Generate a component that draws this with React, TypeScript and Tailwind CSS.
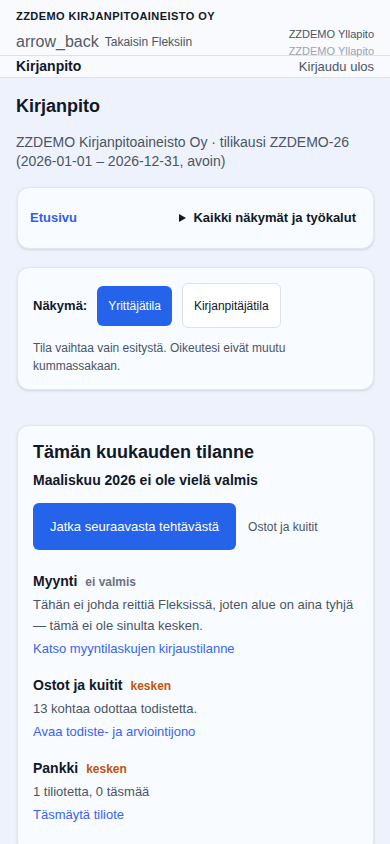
const sections = [
  {
    title: "Myynti",
    status: "ei valmis",
    statusClass: "text-[#6b7280]",
    body: "Tähän ei johda reittiä Fleksissä, joten alue on aina tyhjä — tämä ei ole sinulta kesken.",
    link: "Katso myyntilaskujen kirjaustilanne",
  },
  {
    title: "Ostot ja kuitit",
    status: "kesken",
    statusClass: "text-[#c2540f]",
    body: "13 kohtaa odottaa todistetta.",
    link: "Avaa todiste- ja arviointijono",
  },
  {
    title: "Pankki",
    status: "kesken",
    statusClass: "text-[#c2540f]",
    body: "1 tiliotetta, 0 täsmää",
    link: "Täsmäytä tiliote",
  },
];

function Header() {
  return (
    <header className="bg-[#f8fafd] border-b border-[#dce3f0]">
      <div className="px-4 pt-[8px] text-[11px] leading-[17px] font-bold tracking-[0.04em] text-[#111827]">
        ZZDEMO KIRJANPITOAINEISTO OY
      </div>
      <div className="flex h-[31px] items-center justify-between border-b border-[#dce3f0] px-4">
        <div className="flex items-center gap-[6px] pt-[4px]">
          <span className="text-[16px] leading-[20px] text-[#555b66]">arrow_back</span>
          <span className="text-[12px] leading-[16px] text-[#4b5563]">Takaisin Fleksiin</span>
        </div>
        <div className="flex flex-col items-end self-start pt-px text-[11px] leading-[17px]">
          <span className="text-[#4b5563]">ZZDEMO Yllapito</span>
          <span className="relative -mb-[6px] text-[#9ca3af]">ZZDEMO Yllapito</span>
        </div>
      </div>
      <div className="flex h-[21px] items-center justify-between px-4">
        <span className="text-[14px] font-bold text-[#111827]">Kirjanpito</span>
        <span className="text-[13px] text-[#4b5563]">Kirjaudu ulos</span>
      </div>
    </header>
  );
}

export default function App() {
  return (
    <div
      className="min-h-[844px] bg-[#eef2fd]"
      style={{ fontFamily: '"Liberation Sans", Arial, sans-serif' }}
    >
      <Header />
      <main className="px-4 pt-4 pb-8">
        <h1 className="text-[18px] leading-[24px] font-bold text-[#111827]">Kirjanpito</h1>
        <p className="mt-[15px] text-[14px] leading-[19px] text-[#4b5563]">
          ZZDEMO Kirjanpitoaineisto Oy · tilikausi ZZDEMO-26 (2026-01-01 – 2026-12-31, avoin)
        </p>

        {/* Navigation */}
        <div className="mt-[16px] ml-px flex h-[62px] items-center justify-between rounded-xl border border-[#e0e6f3] bg-[#f8fbff] pl-[12px] pr-[17px] shadow-sm">
          <a className="text-[13px] font-bold text-[#2f5ff0]">Etusivu</a>
          <div className="flex items-center gap-[7px] text-[13px] font-bold text-[#111827]">
            <svg width="7" height="8" viewBox="0 0 7 8">
              <path d="M0 0 L7 4 L0 8 Z" fill="#111827" />
            </svg>
            <span>Kaikki näkymät ja työkalut</span>
          </div>
        </div>

        {/* View mode */}
        <div className="mt-[18px] ml-px rounded-xl border border-[#e0e6f3] bg-[#f8fbff] px-[15px] pt-[15px] pb-[14px] shadow-sm">
          <div className="flex items-center gap-[10px]">
            <span className="text-[13px] font-bold text-[#111827]">Näkymä:</span>
            <button className="h-[40px] rounded-md bg-[#2563eb] px-[11px] text-[12px] text-white">
              Yrittäjätila
            </button>
            <button className="h-[45px] rounded-md border border-[#dbe2ef] bg-white px-[11px] text-[12px] text-[#111827]">
              Kirjanpitäjätila
            </button>
          </div>
          <p className="mt-[11px] text-[12px] leading-[18px] text-[#4b5563]">
            Tila vaihtaa vain esitystä. Oikeutesi eivät muutu kummassakaan.
          </p>
        </div>

        {/* Month status */}
        <div className="mt-[35px] ml-px rounded-xl border border-[#e0e6f3] bg-[#f8fbff] px-[15px] pt-[15px] pb-[28px] shadow-sm">
          <h2 className="text-[18px] leading-[23px] font-bold text-[#111827]">Tämän kuukauden tilanne</h2>
          <p className="mt-[6px] text-[14px] leading-[20px] font-bold text-[#111827]">
            Maaliskuu 2026 ei ole vielä valmis
          </p>
          <div className="mt-[13px] flex items-center gap-[12px]">
            <button className="h-[47px] rounded-md bg-[#2563eb] px-[17px] text-[13px] text-white">
              Jatka seuraavasta tehtävästä
            </button>
            <span className="text-[12px] text-[#4b5563]">Ostot ja kuitit</span>
          </div>

          <div className="mt-[21px] flex flex-col gap-[16px]">
            {sections.map((s) => (
              <div key={s.title}>
                <div className="flex items-baseline gap-[8px] leading-[20px]">
                  <h3 className="text-[14px] font-bold text-[#111827]">{s.title}</h3>
                  <span className={`text-[12px] font-bold ${s.statusClass}`}>{s.status}</span>
                </div>
                <p className="mt-[2px] text-[13px] leading-[21px] text-[#4b5563]">{s.body}</p>
                <a className="mt-[2px] block text-[13px] leading-[21px] text-[#3a63f2]">{s.link}</a>
              </div>
            ))}
          </div>
        </div>
      </main>
    </div>
  );
}
